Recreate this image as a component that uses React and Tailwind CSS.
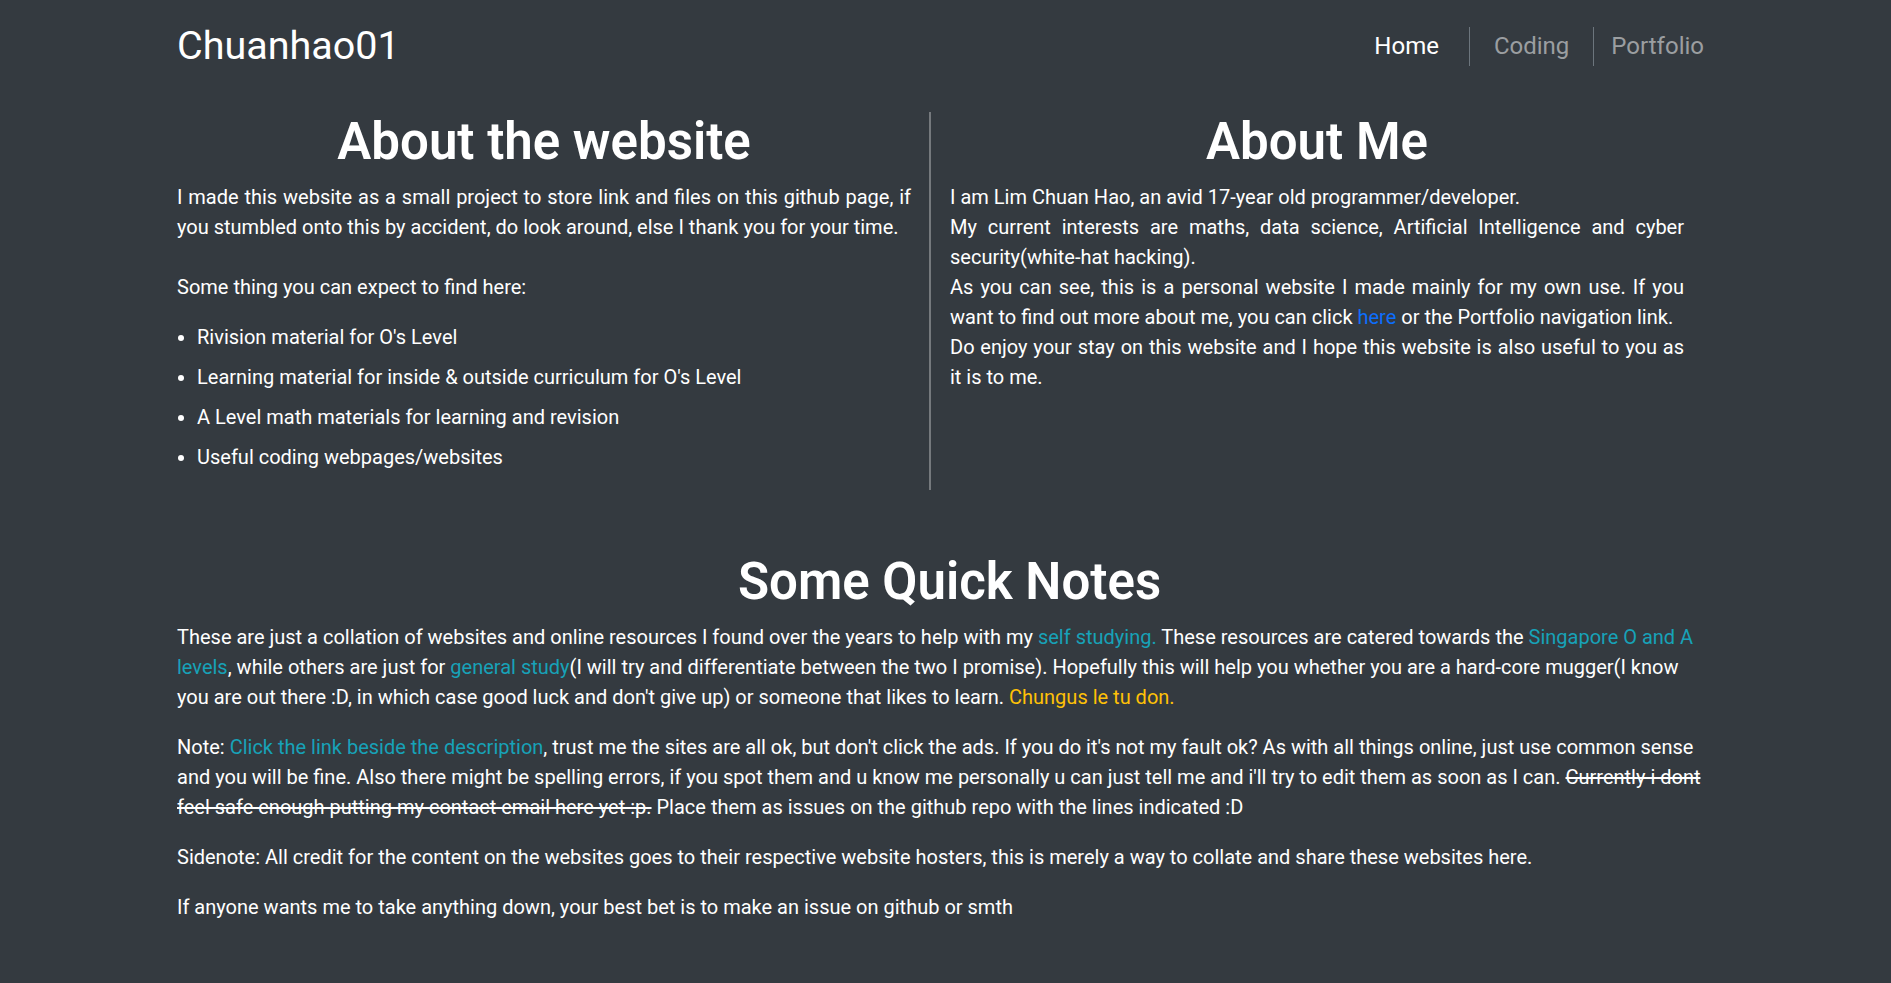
export default function App() {
  const teal = "text-[#17a2b8]";
  return (
    <div className="min-h-screen bg-[#343a40] text-white font-['Roboto',sans-serif] text-[20px] leading-[30px]">
      <nav className="flex items-center justify-between h-[92px] pl-[177px] pr-[162px]">
        <span className="text-[39.5px] leading-none text-white">Chuanhao01</span>
        <div className="flex items-center text-[24px] leading-none">
          <a className="pl-[24px] pr-[30px] text-white">Home</a>
          <span className="w-px h-[39px] bg-[#6c757d]" />
          <a className="pl-[24px] pr-[24px] text-[#9b9ea1]">Coding</a>
          <span className="w-px h-[39px] bg-[#6c757d]" />
          <a className="pl-[17px] pr-[25px] text-[#9b9ea1]">Portfolio</a>
        </div>
      </nav>

      <main className="w-[1537px] mx-auto mt-[20px]">
        <div className="flex">
          <section className="w-[734px]">
            <h1 className="text-[51px] leading-[60px] font-semibold text-center mb-[10px]">About the website</h1>
            <p className="text-justify mb-[20px]">
              I made this website as a small project to store link and files on this github page, if you stumbled onto this by accident, do look around, else I thank you for your time.
              <br />
              <br />
              Some thing you can expect to find here:
            </p>
            <ul className="list-disc pl-[20px] pb-[8px]">
              <li className="mb-[10px]">Rivision material for O's Level</li>
              <li className="mb-[10px]">Learning material for inside &amp; outside curriculum for O's Level</li>
              <li className="mb-[10px]">A Level math materials for learning and revision</li>
              <li className="mb-[10px]">Useful coding webpages/websites</li>
            </ul>
          </section>
          <div className="ml-[18px] mr-[19px] w-[2px] bg-[#75797d]" />
          <section className="w-[734px]">
            <h1 className="text-[51px] leading-[60px] font-semibold text-center mb-[10px]">About Me</h1>
            <p className="text-justify mb-[20px]">
              I am Lim Chuan Hao, an avid 17-year old programmer/developer.
              <br />
              My current interests are maths, data science, Artificial Intelligence and cyber security(white-hat hacking).
              <br />
              As you can see, this is a personal website I made mainly for my own use. If you want to find out more about me, you can click{" "}
              <a className="text-[#0d6efd]">here</a> or the Portfolio navigation link.
              <br />
              Do enjoy your stay on this website and I hope this website is also useful to you as it is to me.
            </p>
          </section>
        </div>

        <section className="mt-[62px]">
          <h1 className="text-[51px] leading-[60px] font-semibold text-center mb-[10px] pl-[8px]">Some Quick Notes</h1>
          <p className="mb-[20px]">
            These are just a collation of websites and online resources I found over the years to help with my{" "}
            <span className={teal}>self studying.</span> These resources are catered towards the{" "}
            <span className={teal}>Singapore O and A levels</span>, while others are just for{" "}
            <span className={teal}>general study</span>(I will try and differentiate between the two I promise). Hopefully this will help you whether you are a hard-core mugger(I know you are out there :D, in which case good luck and don't give up) or someone that likes to learn.{" "}
            <span className="text-[#ffc107]">Chungus le tu don.</span>
          </p>
          <p className="mb-[20px]">
            Note: <span className={teal}>Click the link beside the description</span>, trust me the sites are all ok, but don't click the ads. If you do it's not my fault ok? As with all things online, just use common sense and you will be fine. Also there might be spelling errors, if you spot them and u know me personally u can just tell me and i'll try to edit them as soon as I can.{" "}
            <s>Currently i dont feel safe enough putting my contact email here yet :p.</s> Place them as issues on the github repo with the lines indicated :D
          </p>
          <p className="mb-[20px]">
            Sidenote: All credit for the content on the websites goes to their respective website hosters, this is merely a way to collate and share these websites here.
          </p>
          <p className="mb-[20px]">
            If anyone wants me to take anything down, your best bet is to make an issue on github or smth
          </p>
        </section>
      </main>
    </div>
  );
}
